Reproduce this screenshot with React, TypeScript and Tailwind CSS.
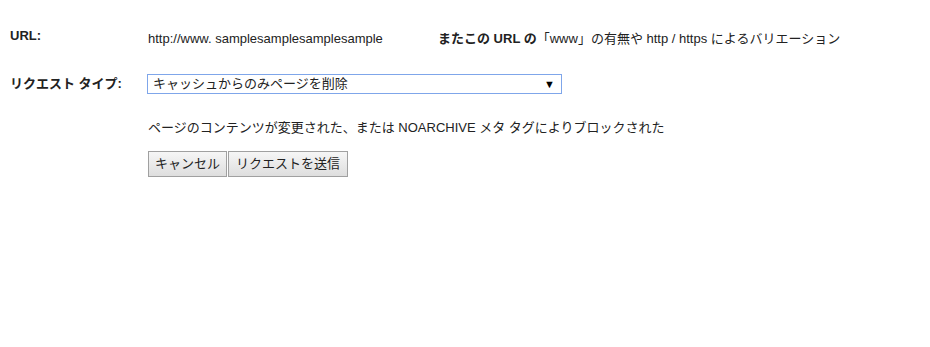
import React from 'react';

const App: React.FC = () => {
  return (
    <div className="w-[930px] h-[347px] bg-white text-[#222] font-['Liberation_Sans','Noto_Sans_CJK_JP',sans-serif] text-[13px]">
      <div className="pt-[28px] pl-[10px]">
        {/* URL 行 */}
        <div className="flex items-start h-[20px]">
          <div className="w-[138px] font-bold text-[13px] leading-[16px]">URL:</div>
          <div className="w-[290px] text-[13px] leading-[20px] pt-[1px]">http://www. samplesamplesamplesample</div>
          <div className="text-[13px] leading-[20px] pt-[1px]">
            <b>またこの URL の</b>「www」の有無や http / https によるバリエーション
          </div>
        </div>

        {/* リクエスト タイプ */}
        <div className="flex items-center mt-[26px] h-[20px]">
          <div className="w-[137px] font-bold text-[13px]">リクエスト タイプ:</div>
          <div className="relative w-[415px] h-[20px] border border-[#7fa6ea] bg-white flex items-center pl-[5px] text-[13px]">
            キャッシュからのみページを削除
            <span className="absolute right-[6px] top-[1px] text-[11px] text-black">▼</span>
          </div>
        </div>

        <div className="pl-[138px] mt-[25px] text-[13px] leading-[18px]">
          ページのコンテンツが変更された、または NOARCHIVE メタ タグによりブロックされた
        </div>

        {/* ボタン */}
        <div className="pl-[138px] mt-[14px] flex">
          <button className="h-[26px] px-[6px] border border-[#a0a0a0] bg-gradient-to-b from-[#f6f6f6] to-[#dedede] text-[13px] text-[#222]">キャンセル</button>
          <button className="h-[26px] px-[7px] border border-[#a0a0a0] bg-gradient-to-b from-[#f6f6f6] to-[#dedede] text-[13px] text-[#222] ml-[1px]">リクエストを送信</button>
        </div>
      </div>
    </div>
  );
};

export default App;
